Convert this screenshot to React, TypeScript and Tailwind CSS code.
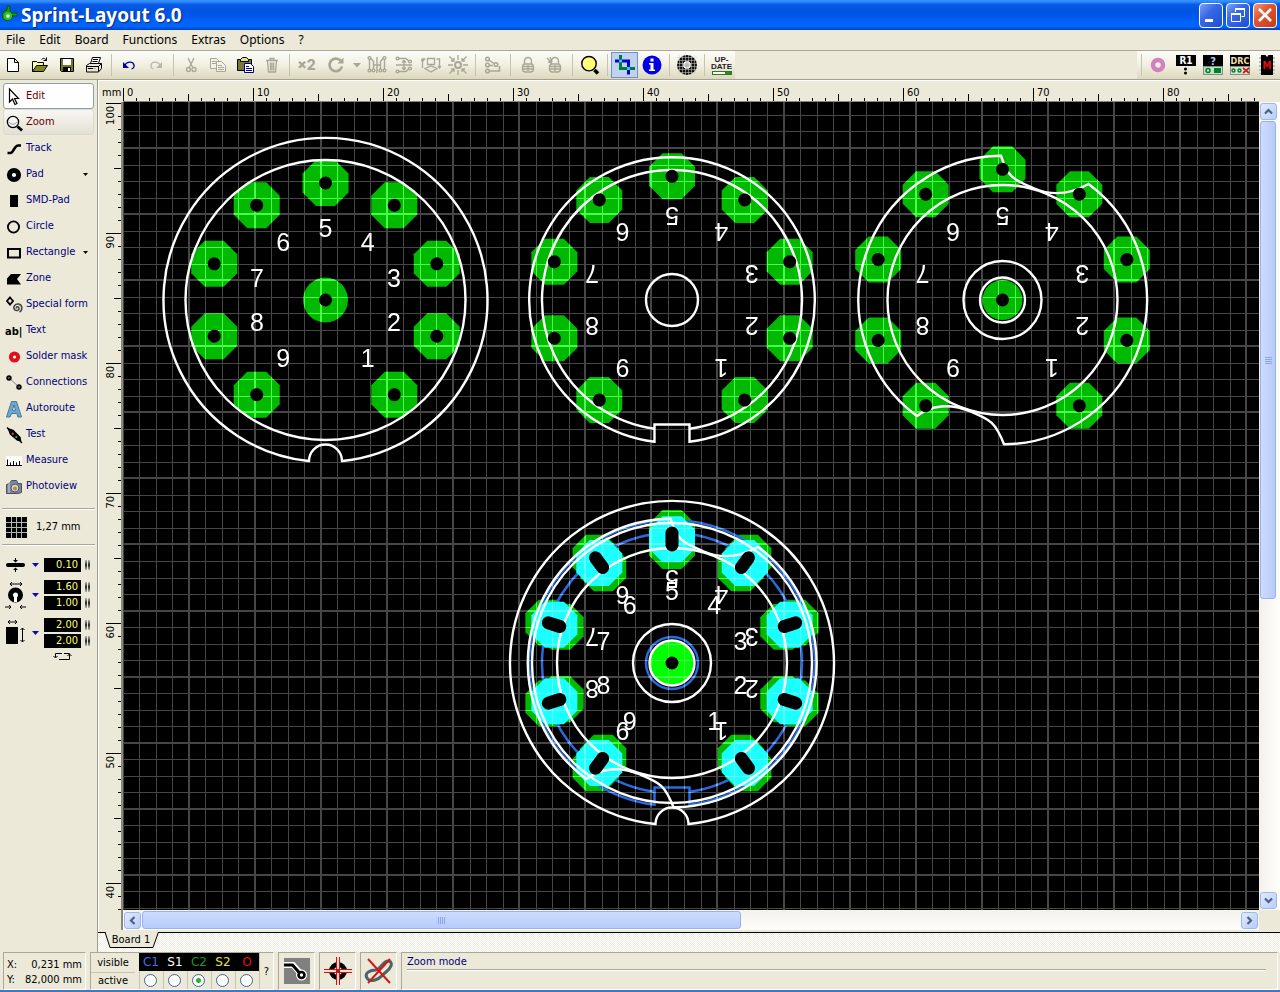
import type { ReactNode } from 'react';

const UI_FONT = "font-['DejaVu_Sans_Condensed','DejaVu_Sans',sans-serif]";
const GREY = '#a9a694';

/* ---------- small helpers ---------- */

function Icon({ size = 20, children }: { size?: number; children: ReactNode }) {
  return (
    <svg width={size} height={size} viewBox="0 0 20 20" fill="none" stroke="#000" aria-hidden="true" className="block shrink-0">
      {children}
    </svg>
  );
}

function ToolButton({ label, active, wide, children }: { label: string; active?: boolean; wide?: string; children: ReactNode }) {
  return (
    <button
      type="button"
      aria-label={label}
      className={`flex h-[26px] shrink-0 items-center justify-center ${wide ?? 'w-[27px]'} ${
        active ? 'border border-[#6f8fd0] bg-[#c1d2ee]' : ''
      }`}
    >
      {children}
    </button>
  );
}

function Sep() {
  return (
    <div className="flex h-[26px] w-2 shrink-0 justify-center py-0.5">
      <div className="w-px bg-[#c6c3b1]" />
    </div>
  );
}

/* ---------- title and menu ---------- */

function TitleBar() {
  return (
    <header className="flex h-[30px] shrink-0 items-center bg-[linear-gradient(#3a94ff_0%,#2a86fb_7%,#0a5be6_14%,#0054e3_35%,#0056ea_55%,#0062fb_72%,#0066ff_88%,#0050d8_95%,#003cba_100%)] pr-[3px] pl-[2px]">
      <svg width="17" height="20" viewBox="0 0 17 20" aria-hidden="true">
        <path d="M5 1h3v5l2 2h5v3h-5l-1 3-4 2-4-2-1-4 2-4 3-1z" fill="#12a012" stroke="#0a4a1a" />
        <circle cx="6" cy="11" r="4" fill="#23c423" />
        <circle cx="6" cy="11" r="1.8" fill="#f4fff4" />
      </svg>
      <h1 className="ml-[2px] flex-1 font-['Noto_Sans',sans-serif] text-[19px] leading-[24px] font-bold text-white [text-shadow:1px_1px_1px_#0a2a80]">
        Sprint-Layout 6.0
      </h1>
      <div className="flex gap-[3px]">
        {['Minimize', 'Restore', 'Close'].map((n) => (
          <button
            key={n}
            type="button"
            aria-label={n}
            className={`flex h-[25px] w-[24px] items-center justify-center rounded-[4px] border border-white ${
              n === 'Close' ? 'bg-[linear-gradient(135deg,#ee9a7c,#e05632_40%,#c23c14)]' : 'bg-[linear-gradient(135deg,#7da2f5,#3868e4_40%,#1c4fd4)]'
            }`}
          >
            <svg width="20" height="20" viewBox="0 0 20 20" aria-hidden="true" fill="none" stroke="#fff">
              {n === 'Minimize' && <path d="M4 15.500h8" strokeWidth="3" />}
              {n === 'Restore' && (
                <>
                  <path d="M7.500 7V3.500h9v8h-3" />
                  <path d="M7 4h10" strokeWidth="2" />
                  <path d="M3.500 8.500h9v8h-9z" />
                  <path d="M3 9h10" strokeWidth="2" />
                </>
              )}
              {n === 'Close' && <path d="M4 4l12 12M16 4L4 16" strokeWidth="2.600" />}
            </svg>
          </button>
        ))}
      </div>
    </header>
  );
}

function MenuBar() {
  return (
    <nav className="flex h-[20px] shrink-0 items-center gap-[14px] px-[6px] font-['Noto_Sans',sans-serif] text-[12px] leading-[16px] text-black">
      {['File', 'Edit', 'Board', 'Functions', 'Extras', 'Options', '?'].map((m) => (
        <button key={m} type="button">
          {m}
        </button>
      ))}
    </nav>
  );
}

/* ---------- toolbar ---------- */

function Toolbar() {
  const grad = 'bg-[linear-gradient(#fcfcf9,#f3f1e4_45%,#dcd9bd)]';
  return (
    <div className="flex h-[30px] shrink-0 border-t border-b border-t-[#aca899] border-b-[#a5a290] bg-[#ece9d8]" role="toolbar" aria-label="Main">
      <div className={`flex items-end pb-px ${grad}`}>
        <ToolButton label="New" wide="w-[26px]">
          <Icon>
            <path d="M4.500 3.500h7l4 4v9h-11z" fill="#fff" />
            <path d="M11.500 3.500v4h4" />
          </Icon>
        </ToolButton>
        <ToolButton label="Open">
          <Icon>
            <path d="M2.500 16.500v-10h4l1 1h6v3" fill="#ffffa0" />
            <path d="M2.500 16.500l4-6h11l-4 6z" fill="#85851f" />
            <path d="M11.500 4.500c2-2 4-1 5 1m0-3v3h-3" />
          </Icon>
        </ToolButton>
        <ToolButton label="Save">
          <Icon>
            <path d="M3.500 3.500h13v13h-12l-1-1z" fill="#77772a" />
            <path d="M6 4h8v6H6z" fill="#fff" stroke="none" />
            <path d="M6 12h8v4H6z" fill="#000" stroke="none" />
            <path d="M11 13h2v3h-2z" fill="#fff" stroke="none" />
          </Icon>
        </ToolButton>
        <ToolButton label="Print">
          <Icon>
            <path d="M6.500 8.500l2-6h8l-2 6" fill="#fff" />
            <path d="M9 4.500h5M8.500 6.500h5" />
            <path d="M2.500 10.500l3-2h12v5l-3 3.500h-12z" fill="#e8e6da" />
            <path d="M2.500 11.500h12v5M14.500 11.500l3-3M4 13.500h8" />
            <path d="M9 13.500h3" stroke="#c9c900" />
          </Icon>
        </ToolButton>
        <Sep />
        <ToolButton label="Undo">
          <Icon>
            <path d="M5.500 10.500C8 6 14 6 15 10c.4 2-1 3.500-2.500 4" stroke="#00009c" strokeWidth="1.300" />
            <path d="M4 7v6h6z" fill="#00009c" stroke="none" />
          </Icon>
        </ToolButton>
        <ToolButton label="Redo">
          <Icon>
            <path d="M14.500 10.500C12 6 6 6 5 10c-.4 2 1 3.500 2.500 4" stroke="#bab7a6" strokeWidth="1.300" />
            <path d="M16 7v6h-6z" fill="#bab7a6" stroke="none" />
          </Icon>
        </ToolButton>
        <Sep />
        <ToolButton label="Cut">
          <Icon>
            <g stroke={GREY} strokeWidth="1.300">
              <path d="M7 3l4.500 9M13 3L8.500 12" />
              <circle cx="7.500" cy="14.500" r="2" />
              <circle cx="13" cy="14.500" r="2" />
            </g>
          </Icon>
        </ToolButton>
        <ToolButton label="Copy">
          <Icon>
            <g stroke={GREY} fill="#f4f2e6">
              <path d="M2.500 3.500h6l3 3v7h-9z" />
              <path d="M8.500 6.500h5l4 4v6h-9z" />
              <path d="M4 6.500h4M4 8.500h4M10 10.500h4M10 12.500h6M10 14.500h6" />
            </g>
          </Icon>
        </ToolButton>
        <ToolButton label="Paste">
          <Icon>
            <path d="M2.500 4.500h14v11h-14z" fill="#77773a" />
            <path d="M5.500 6.500v-2l2-2h4l2 2v2z" fill="#e2e08a" />
            <path d="M9.500 8.500h6l3 3v6h-9z" fill="#fff" stroke="#000080" />
            <path d="M11 11.500h3M11 13.500h6M11 15.500h6" stroke="#000080" />
          </Icon>
        </ToolButton>
        <ToolButton label="Delete">
          <Icon>
            <g stroke={GREY} strokeWidth="1.300">
              <path d="M4 5.500h12M8 5V3.500h4V5" />
              <path d="M5.500 6l1 11h7l1-11M8.500 7.500v8M10 7.500v8M11.700 7.500v8" />
            </g>
          </Icon>
        </ToolButton>
        <Sep />
        <ToolButton label="Duplicate">
          <span className="font-['Inter',sans-serif] text-[14px] leading-[16px] font-extrabold text-[#a9a694]">×2</span>
        </ToolButton>
        <ToolButton label="Rotate" wide="w-[31px]">
          <Icon>
            <path d="M15.500 7A6.300 6.300 0 1 0 16 11.500" stroke={GREY} strokeWidth="2.600" />
            <path d="M17.500 2.500v6h-6z" fill={GREY} stroke="none" />
          </Icon>
        </ToolButton>
        <ToolButton label="Rotation angle" wide="w-[12px]">
          <svg width="8" height="5" aria-hidden="true">
            <path d="M0 0h8L4 4.500z" fill={GREY} />
          </svg>
        </ToolButton>
        <ToolButton label="Mirror horizontal">
          <Icon>
            <g stroke={GREY} strokeWidth="1.400">
              <path d="M10 2v16M2.500 14V4.500M17.500 14V4.500M4 3.500l2.500 3V14M16 3.500l-2.500 3V14M7 10h6" />
              <circle cx="2.500" cy="3" r="1.400" />
              <circle cx="17.500" cy="3" r="1.400" />
              <circle cx="2.500" cy="15.500" r="1.400" />
              <circle cx="6.500" cy="15.500" r="1.400" />
              <circle cx="13.500" cy="15.500" r="1.400" />
              <circle cx="17.500" cy="15.500" r="1.400" />
            </g>
          </Icon>
        </ToolButton>
        <ToolButton label="Mirror vertical">
          <Icon>
            <g stroke={GREY} strokeWidth="1.400">
              <path d="M2 10h16M5 3.500h7L14.500 6M5 16.500h7l2.500-2.500M10 5.500v9M8 7.500l2-2 2 2M8 12.500l2 2 2-2" />
              <circle cx="3.500" cy="3.500" r="1.400" />
              <circle cx="16" cy="6.500" r="1.400" />
              <circle cx="3.500" cy="16.500" r="1.400" />
              <circle cx="16" cy="13.500" r="1.400" />
            </g>
          </Icon>
        </ToolButton>
        <ToolButton label="Swap sides">
          <Icon>
            <g stroke={GREY} strokeWidth="1.300">
              <path d="M6.500 3.500h7v6h-7zM4 13.500l6-2.500 6 2.500-6 3.500zM1.500 13V4h3M0 6l1.500-2L3 6M18.500 13V4h-3M17 11l1.500 2L20 11" />
            </g>
          </Icon>
        </ToolButton>
        <ToolButton label="Snap to grid">
          <Icon>
            <g stroke={GREY} strokeWidth="1.300">
              <circle cx="10" cy="10" r="3" strokeWidth="2" />
              <path d="M10 0v5M10 15v5M0 10h5M15 10h5M1.500 1.500L6 6m0-3v3H3M18.500 1.500L14 6m0-3v3h3M1.500 18.500L6 14m0 3v-3H3M18.500 18.500L14 14m0 3v-3h3" />
            </g>
          </Icon>
        </ToolButton>
        <Sep />
        <ToolButton label="Connect">
          <Icon>
            <g stroke={GREY} strokeWidth="1.500">
              <circle cx="4.500" cy="4" r="1.800" />
              <circle cx="4.500" cy="10" r="1.800" />
              <circle cx="4.500" cy="16" r="1.800" />
              <path d="M6 5l5 3.500M6 10.500h4M6 16h10.500V11" />
              <circle cx="13" cy="9.500" r="1.800" />
            </g>
          </Icon>
        </ToolButton>
        <Sep />
        <ToolButton label="Lock">
          <Icon>
            <g stroke={GREY} strokeWidth="1.400">
              <path d="M6.500 9V6a3.500 3.500 0 0 1 7 0v3" />
              <rect x="4.500" y="9" width="11" height="8" rx="3" />
              <path d="M5 11.500h10M5 14h10M10 10v6" />
            </g>
          </Icon>
        </ToolButton>
        <ToolButton label="Unlock">
          <Icon>
            <g stroke={GREY} strokeWidth="1.400">
              <path d="M6.500 9V6a3.500 3.500 0 0 1 7 0v3M2 3l5 5M3 7l4 1M5 2l2 5" />
              <rect x="4.500" y="9" width="11" height="8" rx="3" />
              <path d="M5 11.500h10M5 14h10M10 10v6" />
            </g>
          </Icon>
        </ToolButton>
        <Sep />
        <ToolButton label="Zoom">
          <Icon>
            <path d="M14.500 15l3.500 3.500" strokeWidth="3.500" />
            <circle cx="9" cy="8.700" r="7.200" fill="#ffff7a" strokeWidth="1.400" />
          </Icon>
        </ToolButton>
        <Sep />
        <ToolButton label="Tracks" active>
          <Icon>
            <path d="M5.500 0v13.500H20" stroke="#007a3c" strokeWidth="3" />
            <path d="M0 6h13.500v13.500" stroke="#0000d0" strokeWidth="3" />
            <path d="M4 4.500h3v3H4zM12 12h3v3h-3z" fill="#30c8e8" stroke="none" />
          </Icon>
        </ToolButton>
        <ToolButton label="Info">
          <Icon>
            <circle cx="10" cy="10" r="9.500" fill="#0000e6" stroke="none" />
            <path d="M8.500 3.500h3v3h-3zM7 8h4.500v6.500H13V16H7v-1.500h1.500v-5H7z" fill="#fff" stroke="none" />
          </Icon>
        </ToolButton>
        <Sep />
        <ToolButton label="Fill">
          <Icon>
            <circle cx="10" cy="10" r="10" fill="#111" stroke="none" />
            <path d="M2.500 0v20M5.500 0v20M8.500 0v20M11.500 0v20M14.500 0v20M17.500 0v20M0 2.500h20M0 5.500h20M0 8.500h20M0 11.500h20M0 14.500h20M0 17.500h20" stroke="#d8d6ca" strokeWidth="0.500" />
            <circle cx="10" cy="10" r="3.800" fill="#fff" stroke="none" />
            <circle cx="10" cy="10" r="2.600" fill="#bbb" stroke="none" />
          </Icon>
        </ToolButton>
        <Sep />
        <ToolButton label="Update">
          <span className="flex flex-col items-center font-['Liberation_Sans',sans-serif] text-[8px] leading-[7px] font-bold text-[#222]">
            <span>UP-</span>
            <span>DATE</span>
            <span className="mt-px h-[4px] w-[20px] border border-[#2c7a1c] bg-[linear-gradient(90deg,#fff_65%,#2c8a1c_65%)]" />
          </span>
        </ToolButton>
      </div>
      <div className="flex-1" />
      <div className={`flex items-end pb-px ${grad}`}>
        <Sep />
        <ToolButton label="Flood">
          <Icon>
            <circle cx="9" cy="10" r="5" stroke="#d381bd" strokeWidth="4.500" />
          </Icon>
        </ToolButton>
        <ToolButton label="Components">
          <Icon>
            <rect x="0" y="0" width="20" height="11" fill="#000" stroke="none" />
            <text x="10" y="9" textAnchor="middle" fontSize="10" fontWeight="bold" fill="#fff" stroke="none">
              R1
            </text>
            <circle cx="9.500" cy="14" r="1.500" fill="#000" stroke="none" />
            <circle cx="9.500" cy="18" r="1.500" fill="#000" stroke="none" />
          </Icon>
        </ToolButton>
        <ToolButton label="Properties">
          <Icon>
            <rect x="0" y="0" width="20" height="11" fill="#000" stroke="none" />
            <text x="10" y="9.500" textAnchor="middle" fontSize="11" fontWeight="bold" fill="#b9c6ff" stroke="none">
              ?
            </text>
            <rect x="0.500" y="11.500" width="19" height="8" fill="#b8e8c4" stroke="#888" />
            <circle cx="5" cy="15.500" r="2" stroke="#087a2c" strokeWidth="1.500" />
            <rect x="11" y="13" width="7" height="5" fill="#087a2c" stroke="none" />
          </Icon>
        </ToolButton>
        <ToolButton label="Design rule check">
          <Icon>
            <rect x="0" y="0" width="20" height="11" fill="#000" stroke="none" />
            <text x="10" y="9" textAnchor="middle" fontSize="9" fontWeight="bold" fill="#f2dfae" stroke="none">
              DRC
            </text>
            <rect x="0.500" y="11.500" width="19" height="8" fill="#d8e8d0" stroke="#888" />
            <circle cx="3.500" cy="15.500" r="1.500" stroke="#087a2c" strokeWidth="1.400" />
            <circle cx="9.500" cy="15.500" r="1.500" stroke="#087a2c" strokeWidth="1.400" />
            <path d="M13 13l6 5M19 13l-6 5" stroke="#d01818" strokeWidth="1.700" />
          </Icon>
        </ToolButton>
        <ToolButton label="Macros">
          <Icon>
            <path d="M3 2v17M17 2v17" stroke="#bbb" strokeWidth="2" strokeDasharray="2 2" />
            <path d="M4 0h4.500l1.500 2L11.500 0H16v20H4z" fill="#000" stroke="none" />
            <text x="10" y="14" textAnchor="middle" fontSize="10" fontWeight="bold" fill="#e01010" stroke="none">
              M
            </text>
          </Icon>
        </ToolButton>
      </div>
    </div>
  );
}

/* ---------- left panel ---------- */

const TOOLS: { name: string; menu?: boolean; icon: ReactNode }[] = [
  { name: 'Edit', icon: <path d="M5.500 2v13l3-3 2.500 5.500 2-1-2.500-5h4z" fill="#fff" strokeWidth="1.200" /> },
  {
    name: 'Zoom',
    icon: (
      <>
        <path d="M13.500 13.500l4.500 4" strokeWidth="3" />
        <circle cx="9" cy="9" r="5.600" fill="#f6f6f6" strokeWidth="1.300" />
        <path d="M5 9c2 3 6 3 8 0" stroke="#999" />
      </>
    ),
  },
  { name: 'Track', icon: <path d="M3.500 14h3c3 0 4-7.500 7.500-7.500h3" strokeWidth="2.600" /> },
  { name: 'Pad', menu: true, icon: <circle cx="10" cy="10" r="4.600" strokeWidth="5" fill="#fff" /> },
  { name: 'SMD-Pad', icon: <rect x="6" y="4" width="8" height="12" fill="#000" stroke="none" /> },
  { name: 'Circle', icon: <circle cx="9.500" cy="10" r="5.600" strokeWidth="1.800" /> },
  { name: 'Rectangle', menu: true, icon: <rect x="4" y="6" width="12" height="8.500" strokeWidth="2" /> },
  { name: 'Zone', icon: <path d="M3 15.500v-6l4-4.500h10l-4 5 4 5.500z" fill="#000" stroke="none" /> },
  {
    name: 'Special form',
    icon: (
      <>
        <path d="M6 2.500l3 3.500-3 3.500L3 6z" strokeWidth="1.800" />
        <path d="M12.500 13.500c-1-2 2-2.500 2.500-.5.600 2.500-3 3.500-4.500 1.500-2-3 1-6 4-5.500 4 .6 4.500 6 1 8" stroke="#444" strokeWidth="1.500" />
      </>
    ),
  },
  {
    name: 'Text',
    icon: (
      <text x="1" y="14" fontSize="11" fontWeight="bold" fill="#000" stroke="none">
        ab|
      </text>
    ),
  },
  { name: 'Solder mask', icon: <circle cx="10.500" cy="10" r="3.600" stroke="#e3101c" strokeWidth="4" fill="#fff" /> },
  {
    name: 'Connections',
    icon: (
      <>
        <path d="M5 5l10 9" stroke="#888" />
        <circle cx="5" cy="5" r="1.700" strokeWidth="2" />
        <circle cx="15" cy="14" r="1.700" strokeWidth="2" />
      </>
    ),
  },
  {
    name: 'Autoroute',
    icon: <path d="M2.500 18L7.500 2.500h5L17.500 18h-3.600l-1-3.500H7.500L6 18zM8.300 11.300h3.400L10 5.800z" fill="#6fa8cf" stroke="#47779c" />,
  },
  {
    name: 'Test',
    icon: (
      <>
        <path d="M3 2.500l4 4M14 14l4 4" strokeWidth="1.300" />
        <path d="M4.500 4L9 5.500l7 7 .500 3-3-.500-7-6z" fill="#000" strokeWidth="1.500" />
        <path d="M8 8l1.500 1.500" stroke="#e04040" strokeWidth="2" />
        <path d="M11.500 11.500l1.500 1" stroke="#40c060" strokeWidth="2" />
      </>
    ),
  },
  {
    name: 'Measure',
    icon: (
      <>
        <rect x="2" y="5" width="16" height="9" fill="#fff" stroke="none" />
        <path d="M2 14.500h16M3.500 14V8.500M6.500 14v-2.500M9.500 14v-4M12.500 14v-2.500M15.500 14v-4" />
      </>
    ),
  },
  {
    name: 'Photoview',
    icon: (
      <>
        <path d="M2.500 7.500l3-1 2-3h5l1.500 3h3.500v9l-3 1h-12z" fill="#7c86a0" stroke="#4a4f5c" />
        <path d="M5 6v10" stroke="#c8ccd8" />
        <circle cx="11" cy="11" r="4" fill="#cfd4de" stroke="#555" />
        <circle cx="11" cy="11.500" r="2" fill="#b98a34" stroke="none" />
      </>
    ),
  },
];

function Field({ label, value }: { label: string; value: string }) {
  return (
    <div className="flex items-center gap-[4px]">
      <input
        aria-label={label}
        defaultValue={value}
        className="h-[14px] w-[37px] bg-black pr-[3px] text-right text-[11px] leading-[14px] text-[#ffff7d] outline-none"
      />
      <span className="flex h-[10px] gap-px">
        <span className="w-[2px] bg-[linear-gradient(#bbb,#222_50%,#bbb)]" />
        <span className="w-[2px] bg-[linear-gradient(#bbb,#222_50%,#bbb)]" />
      </span>
    </div>
  );
}

function Caret() {
  return (
    <button type="button" aria-label="Presets" className="flex h-[14px] w-[18px] items-center justify-center">
      <svg width="7" height="4" aria-hidden="true">
        <path d="M0 0h7L3.500 4z" fill="#0a0ab8" />
      </svg>
    </button>
  );
}

function SidePanel() {
  return (
    <aside className="flex w-[98px] shrink-0 flex-col border-r border-[#a09d8d] pt-[3px]">
      <div className="flex flex-col px-[3px] text-[11px]">
        {TOOLS.map((t, i) => (
          <button
            key={t.name}
            type="button"
            className={`flex h-[26px] items-center gap-[2px] pt-px text-left ${
              i === 0
                ? 'rounded-[3px] border border-[#8b9fae] bg-[#fefefe] text-[#6b0000]'
                : i === 1
                  ? 'rounded-[3px] border border-[#dcdacf] bg-[linear-gradient(#f8f7f3,#e3e1d6)] text-[#6b0000]'
                  : 'border border-transparent text-[#00007c]'
            }`}
          >
            <Icon>{t.icon}</Icon>
            <span className="flex-1 whitespace-nowrap">{t.name}</span>
            {t.menu && (
              <svg width="5" height="3" className="mr-[5px]" aria-hidden="true">
                <path d="M0 0h5L2.500 3z" fill="#000" />
              </svg>
            )}
          </button>
        ))}
      </div>
      <div className="mx-[2px] mt-[9px] border-t border-b border-t-[#aca899] border-b-white" />
      <button type="button" className="flex h-[34px] items-center gap-[9px] pl-[6px] text-[11px]">
        <svg width="21" height="21" aria-hidden="true">
          <rect width="21" height="21" fill="#000" />
          <path d="M5.500 0v21M10.500 0v21M15.500 0v21M0 5.500h21M0 10.500h21M0 15.500h21" stroke="#b4b4b4" />
        </svg>
        <span>1,27 mm</span>
      </button>
      <div className="mx-[2px] border-t border-b border-t-[#aca899] border-b-white" />
      <div className="flex flex-col gap-[8px] pt-[12px] pl-[5px]">
        <div className="flex items-center">
          <svg width="21" height="14" viewBox="0 0 21 14" aria-hidden="true">
            <path d="M3 7h15" stroke="#000" strokeWidth="4" strokeLinecap="round" />
            <path d="M10.500 0v3M10.500 11v3" stroke="#000" />
            <path d="M8 2h5l-2.500 2.500zM8 12h5l-2.500-2.500z" />
          </svg>
          <Caret />
          <Field label="Track width" value="0.10" />
        </div>
        <div className="flex items-center">
          <svg width="21" height="30" viewBox="0 0 21 30" aria-hidden="true">
            <path d="M5 4h12M7 2L5 4l2 2M15 2l2 2-2 2M0 27h6M4 25l2 2-2 2M15 27h6M17 25l-2 2 2 2" stroke="#000" fill="none" />
            <circle cx="10.500" cy="15" r="5" fill="#fff" stroke="#000" strokeWidth="5" />
            <path d="M9 16h3v6H9z" fill="#fff" />
          </svg>
          <Caret />
          <div className="flex flex-col gap-[2px]">
            <Field label="Pad outer diameter" value="1.60" />
            <Field label="Pad hole diameter" value="1.00" />
          </div>
        </div>
        <div className="flex items-center">
          <svg width="21" height="30" viewBox="0 0 21 30" aria-hidden="true">
            <path d="M3 4h9M5 2L3 4l2 2M10 2l2 2-2 2M17.500 10v14M15.500 12l2-2 2 2M15.500 22l2 2 2-2" stroke="#000" fill="none" />
            <rect x="1" y="9" width="12" height="17" />
          </svg>
          <Caret />
          <div className="flex flex-col gap-[2px]">
            <Field label="SMD width" value="2.00" />
            <Field label="SMD height" value="2.00" />
          </div>
        </div>
      </div>
      <button type="button" aria-label="Swap width and height" className="mt-[4px] flex justify-center pl-[28px]">
        <svg width="21" height="9" viewBox="0 0 21 9" aria-hidden="true" fill="none" stroke="#000">
          <path d="M3.500 5V1.500H10M1.500 4l2 2 2-2M17.500 4v3.500H7M12 1.500h5.500V4M15.500 4l2-2 2 2" />
        </svg>
      </button>
    </aside>
  );
}

/* ---------- rulers ---------- */

const TICKS = Array.from({ length: 200 }, (_, i) => i);
const TOP_LABELS = [0, 10, 20, 30, 40, 50, 60, 70, 80];
const LEFT_LABELS = [100, 90, 80, 70, 60, 50, 40];

function TopRuler() {
  return (
    <svg className="block h-full w-full" aria-hidden="true">
      {TICKS.map((i) => (
        <rect key={i} x={i * 13} y={i % 10 === 0 ? 7 : i % 5 === 0 ? 13 : 17} width="1" height={i % 10 === 0 ? 13 : i % 5 === 0 ? 7 : 3} fill="#000" />
      ))}
      {TOP_LABELS.map((i) => (
        <text key={i} x={i * 13 + 4} y="15" fontSize="11">
          {i}
        </text>
      ))}
    </svg>
  );
}

function LeftRuler() {
  return (
    <svg className="block h-full w-full" aria-hidden="true">
      {TICKS.map((i) => {
        const len = i % 10 === 0 ? 15 : i % 5 === 0 ? 7 : 3;
        return <rect key={i} x={22 - len} y={i * 13 + 1} width={len} height="1" fill="#000" />;
      })}
      {LEFT_LABELS.map((v) => (
        <text key={v} transform={`translate(15 ${(100 - v) * 13 + 4}) rotate(-90)`} textAnchor="end" fontSize="11">
          {v}
        </text>
      ))}
    </svg>
  );
}

/* ---------- board drawing ---------- */

const LINES = Array.from({ length: 180 }, (_, i) => i);
const GREEN = '#00b900';

function BoardGrid() {
  return (
    <g fill="#464646" className="mix-blend-plus-lighter">
      {LINES.map((k) => {
        const major = k % 4 === 0;
        const x = Math.floor(123 + 16.525 * k);
        return <rect key={k} x={major ? x - 1 : x} y="100" width={major ? 2 : 1} height="3000" />;
      })}
      {LINES.map((k) => {
        const major = k % 4 === 0;
        const y = Math.floor(82.4 + 16.52 * k);
        return <rect key={k} x="120" y={major ? y - 1 : y} width="3000" height={major ? 2 : 1} />;
      })}
    </g>
  );
}

/* Pins sit on a ten-step circle, number 5 on top and the bottom step left out. */
function pinAt(n: number, r: number): [number, number] {
  const a = ((5 - n) * 36 * Math.PI) / 180;
  return [r * Math.sin(a), -r * Math.cos(a)];
}
const PINS = [1, 2, 3, 4, 5, 6, 7, 8, 9];

function Pads({ r, fill = GREEN }: { r: number; fill?: string }) {
  return (
    <g fill={fill}>
      {PINS.map((n) => {
        const [x, y] = pinAt(n, r);
        return <path key={n} transform={`translate(${x} ${y})`} d="M-9.500-23H9.500L23-9.500V9.500L9.500 23H-9.500L-23 9.500V-9.500z" />;
      })}
    </g>
  );
}

function Holes({ r, r2 = r }: { r: number; r2?: number }) {
  return (
    <g stroke="#000" strokeWidth="13" strokeLinecap="round">
      {PINS.map((n) => {
        const [x, y] = pinAt(n, r);
        const [u, v] = pinAt(n, r2 + 0.01);
        return <path key={n} d={`M${x} ${y}L${u} ${v}`} />;
      })}
    </g>
  );
}

function Numbers({ r, turned }: { r: number; turned?: boolean }) {
  return (
    <g fill="#fff" fontSize="25" textAnchor="middle" className="font-['Liberation_Sans',sans-serif]">
      {PINS.map((n) => {
        const [x, y] = pinAt(n, r);
        return (
          <text key={n} transform={`translate(${x} ${y}) rotate(${turned ? 180 : 0})`} y="9">
            {n}
          </text>
        );
      })}
    </g>
  );
}

function OutlineA() {
  return (
    <g>
      <path d="M17 161A162 162 0 1 0-17 161H-16.500A16.500 16.500 0 0 1 16.500 161z" />
      <circle r="140" />
    </g>
  );
}

function OutlineB() {
  return (
    <g>
      <path d="M-17.500 128.800A130 130 0 1 1 17.500 128.800" />
      <path d="M17.500 141.700A142.800 142.800 0 1 0-17.500 141.700V124.500H17.500z" />
      <circle r="26" />
    </g>
  );
}

function OutlineC() {
  return (
    <g>
      <path d="M-1.500-144.300A144.300 144.300 0 0 0-85.600 116C-72 105-52 103-32 111.500S-7 122 1.500 144.300A144.300 144.300 0 0 0 86-116C70-107 52-103 32-111.500S5-122-1.500-144.300z" />
      <circle r="115" />
      <circle r="39" />
      <circle r="22.500" />
    </g>
  );
}

function Board() {
  return (
    <svg className="isolate block h-full w-full bg-black" role="img" aria-label="Circuit board">
      <g transform="translate(-123 -102)">
        <g transform="translate(325.500 300)">
          <Pads r={117} />
          <circle r="22.500" fill={GREEN} />
        </g>
        <g transform="translate(672 300)">
          <Pads r={123.7} />
        </g>
        <g transform="translate(1002.500 300)">
          <Pads r={130.7} />
          <circle r="20" fill={GREEN} />
        </g>
        <g transform="translate(672 663)">
          <Pads r={130} />
          <Pads r={117} />
          <g stroke="#2c69dc" strokeWidth="2.500" fill="none">
            <OutlineB />
          </g>
          <Pads r={123.7} fill="#1cffff" />
          <circle r="22" fill="#00ff00" />
        </g>
        <BoardGrid />
        <g stroke="#fff" strokeWidth="2.400" fill="none">
          <g transform="translate(325.500 300)">
            <OutlineA />
          </g>
          <g transform="translate(672 300)">
            <OutlineB />
          </g>
          <g transform="translate(1002.500 300)">
            <OutlineC />
          </g>
          <g transform="translate(672 663)">
            <OutlineA />
            <OutlineC />
          </g>
        </g>
        <g transform="translate(325.500 300)">
          <Holes r={117} />
          <circle r="6.500" />
          <Numbers r={72} />
        </g>
        <g transform="translate(672 300)">
          <Holes r={123.7} />
          <Numbers r={84} turned />
        </g>
        <g transform="translate(1002.500 300)">
          <Holes r={130.7} />
          <circle r="6.500" />
          <Numbers r={84} turned />
        </g>
        <g transform="translate(672 663)">
          <Holes r={118} r2={130} />
          <circle r="6.500" />
          <Numbers r={72} />
          <Numbers r={84} turned />
        </g>
      </g>
    </svg>
  );
}

/* ---------- scroll bars ---------- */

function ScrollButton({ label, d }: { label: string; d: string }) {
  return (
    <button
      type="button"
      aria-label={label}
      className="flex h-[17px] w-[17px] shrink-0 items-center justify-center rounded-[3px] border border-[#9db8ee] bg-[linear-gradient(135deg,#e1eafe,#b9cdfa)]"
    >
      <svg width="9" height="9" viewBox="0 0 9 9" fill="none" stroke="#4d6185" strokeWidth="2.200" aria-hidden="true">
        <path d={d} />
      </svg>
    </button>
  );
}

function VScroll() {
  return (
    <div className="flex flex-col items-center bg-[linear-gradient(90deg,#f3f1ec,#fefefb)] py-px pr-[3px]">
      <ScrollButton label="Scroll up" d="M1 6.500L4.500 3 8 6.500" />
      <div className="flex min-h-0 w-full flex-1 flex-col px-px pt-px">
        <div className="flex h-[62%] flex-col items-center justify-center gap-px rounded-[3px] border border-[#98b2ea] bg-[linear-gradient(90deg,#cddcfe,#b7cafa)]">
          {[0, 1, 2, 3].map((i) => (
            <span key={i} className="h-px w-[7px] bg-[#8ba6e4]" />
          ))}
        </div>
      </div>
      <ScrollButton label="Scroll down" d="M1 2.500L4.500 6 8 2.500" />
    </div>
  );
}

function HScroll() {
  return (
    <div className="flex items-center bg-[linear-gradient(#f3f1ec,#fefefb)] px-px">
      <ScrollButton label="Scroll left" d="M6.500 1L3 4.500 6.500 8" />
      <div className="flex h-full min-w-0 flex-1 py-px pl-px">
        <div className="flex w-6/11 items-center justify-center gap-px rounded-[3px] border border-[#98b2ea] bg-[linear-gradient(#cddcfe,#b7cafa)]">
          {[0, 1, 2, 3].map((i) => (
            <span key={i} className="h-[7px] w-px bg-[#8ba6e4]" />
          ))}
        </div>
      </div>
      <ScrollButton label="Scroll right" d="M2.500 1L6 4.500 2.500 8" />
    </div>
  );
}

/* ---------- status bar ---------- */

const LAYERS = [
  { name: 'C1', color: 'text-[#3f6fe8]' },
  { name: 'S1', color: 'text-white' },
  { name: 'C2', color: 'text-[#1d9a1d]' },
  { name: 'S2', color: 'text-[#e6e62c]' },
  { name: 'O', color: 'text-[#ee1010]' },
];

const PANEL = 'border-t border-l border-t-[#aca899] border-l-[#aca899] border-r border-b border-r-white border-b-white';

function StatusBar() {
  return (
    <footer className="flex h-[38px] shrink-0 gap-[4px] bg-[#ece9d8] pr-[2px] pl-[3px] text-[11px] leading-[15px]">
      <dl className={`grid w-[83px] grid-cols-[16px_1fr] content-center pt-[2px] pr-[3px] pl-[3px] ${PANEL}`}>
        <dt>X:</dt>
        <dd className="text-right">0,231 mm</dd>
        <dt>Y:</dt>
        <dd className="text-right">82,000 mm</dd>
      </dl>
      <div className={`flex w-[184px] ${PANEL}`}>
        <div className="grid w-[48px] grid-rows-2 items-center pr-[4px] text-center">
          <span>visible</span>
          <span className="border-t border-[#c6c3b1]">active</span>
        </div>
        {LAYERS.map((l) => (
          <div key={l.name} className="flex w-[24px] flex-col">
            <button type="button" className={`h-[18px] bg-black font-['DejaVu_Sans',sans-serif] text-[12px] leading-[16px] ${l.color}`}>
              {l.name}
            </button>
            <label className="flex flex-1 items-center justify-center border-l border-[#c6c3b1] pr-[3px]">
              <input
                type="radio"
                name="layer"
                aria-label={l.name}
                defaultChecked={l.name === 'C2'}
                className="h-[13px] w-[13px] appearance-none rounded-full border border-[#41678c] bg-white checked:bg-[radial-gradient(circle,#2fae2f_0_2px,#fff_3px)]"
              />
            </label>
          </div>
        ))}
        <button type="button" className="flex-1 border-l border-[#c6c3b1]">
          ?
        </button>
      </div>
      <button type="button" aria-label="Rubber band" className={`flex w-[37px] items-center justify-center ${PANEL}`}>
        <svg width="26" height="26" viewBox="0 0 26 26" fill="none" aria-hidden="true">
          <rect width="26" height="26" fill="#808080" />
          <path d="M0 7h9l8 9" stroke="#fff" strokeWidth="6" />
          <circle cx="17.500" cy="17" r="5.500" fill="#fff" />
          <path d="M0 7h8.500l8 9" stroke="#000" strokeWidth="3" />
          <circle cx="17.500" cy="17" r="3" stroke="#000" strokeWidth="2.600" fill="#fff" />
        </svg>
      </button>
      <button type="button" aria-label="Crosshair" className={`flex w-[37px] items-center justify-center ${PANEL}`}>
        <svg width="28" height="28" viewBox="0 0 28 28" fill="none" aria-hidden="true">
          <circle cx="14" cy="14" r="6.500" stroke="#000" strokeWidth="5" fill="#fff" />
          <path d="M14 0v28M0 14h28" stroke="#f0dcd4" strokeWidth="2" />
          <path d="M12.500 0v28M15.500 0v28M0 12.500h28M0 15.500h28" stroke="#c41414" />
          <circle cx="14" cy="14" r="2" fill="#c41414" />
        </svg>
      </button>
      <button type="button" aria-label="Capture off" className={`flex w-[37px] items-center justify-center ${PANEL}`}>
        <svg width="30" height="28" viewBox="0 0 30 28" fill="none" aria-hidden="true">
          <path d="M3 21c-3-5 3-8 9-8 5-1 7-10 13-9 5 2 1 8-3 11-5 4-6 7-11 8-3 1-6 1-8-2z" stroke="#4c6468" strokeWidth="3" />
          <path d="M4 2l22 24M26 2L4 26" stroke="#d01818" strokeWidth="2" />
        </svg>
      </button>
      <div className={`min-w-0 flex-1 px-[5px] pt-px ${PANEL}`}>
        <p className="text-[#00007c]">Zoom mode</p>
        <div className="mr-[6px] border-t border-b border-t-[#aca899] border-b-white" />
      </div>
    </footer>
  );
}

/* ---------- page ---------- */

export default function App() {
  return (
    <div className={`flex h-screen flex-col overflow-hidden border-b-2 border-[#3c78c8] bg-[#ece9d8] text-black ${UI_FONT}`}>
      <TitleBar />
      <MenuBar />
      <Toolbar />
      <div className="flex min-h-0 flex-1">
        <SidePanel />
        <main className="flex min-w-0 flex-1 flex-col">
          <div className="grid min-h-0 flex-1 grid-cols-[24px_minmax(0,1fr)_21px] grid-rows-[21px_minmax(0,1fr)_20px] border-t border-l border-white">
            <div className="pt-[4px] pl-[3px] text-[11px] leading-[15px]">mm</div>
            <div className="border-b border-[#8a887c]">
              <TopRuler />
            </div>
            <div />
            <div className="min-h-0 overflow-hidden border-r-2 border-[#8a887c]">
              <LeftRuler />
            </div>
            <div className="min-h-0 overflow-hidden">
              <Board />
            </div>
            <VScroll />
            <div className="border-r-2 border-[#8a887c]" />
            <HScroll />
            <div />
          </div>
          <div className="h-[2px] shrink-0 border-l border-white" />
          <div
            className="h-[20px] shrink-0 border-t border-black bg-[conic-gradient(#ffffff_25%,#f0eee0_0_50%,#ffffff_0_75%,#f0eee0_0)] bg-[length:2px_2px] pl-[7px]"
            role="tablist"
          >
            <button type="button" role="tab" aria-selected="true" className="relative -mt-px flex h-[16px] w-[54px] items-center justify-center text-[11px]">
              <svg width="54" height="16" viewBox="0 0 54 16" className="absolute inset-0" aria-hidden="true">
                <path d="M0 0l5 15.500h43L53.500 0" fill="#ece9d8" stroke="#000" />
              </svg>
              <span className="relative pr-[2px] whitespace-nowrap">Board 1</span>
            </button>
          </div>
        </main>
      </div>
      <StatusBar />
    </div>
  );
}
